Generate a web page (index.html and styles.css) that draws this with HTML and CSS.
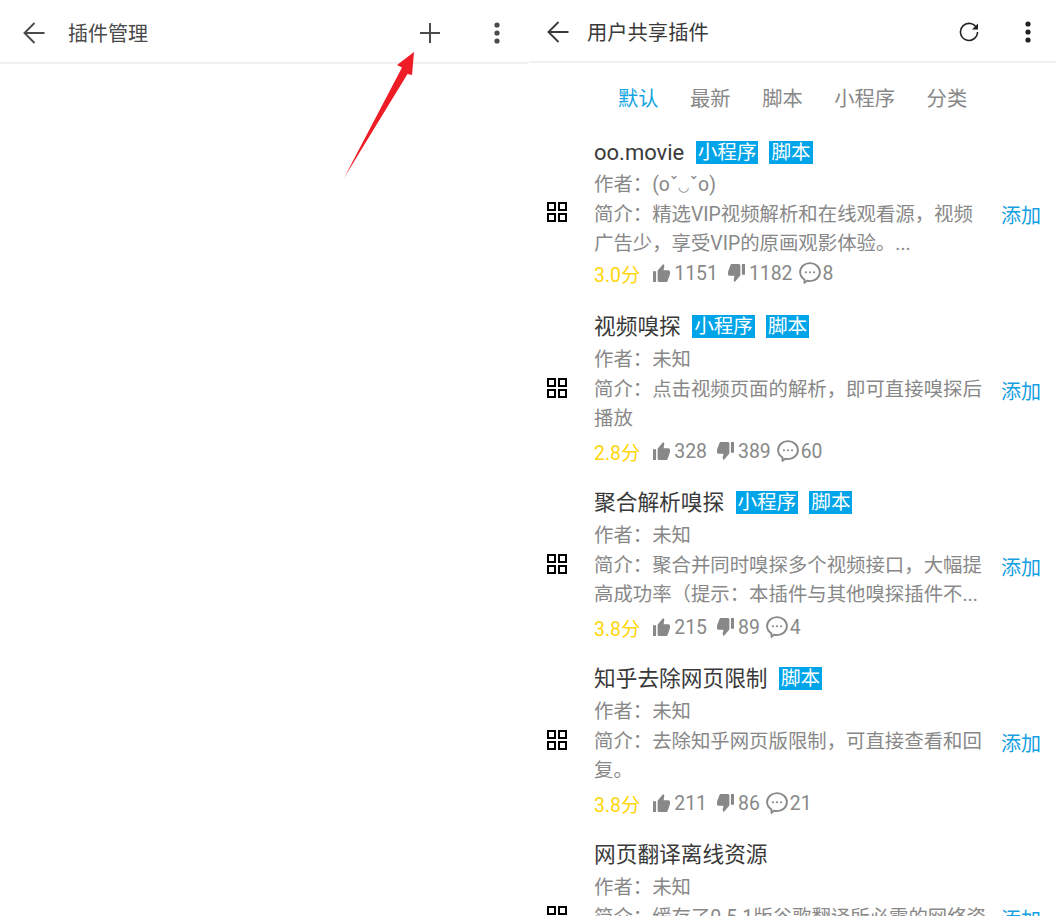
FILE: index.html
```html
<!DOCTYPE html>
<html lang="zh-CN">
<head>
  <meta charset="UTF-8" />
  <meta name="viewport" content="width=device-width, initial-scale=1.0"/>
  <title>用户共享插件</title>
  <link rel="stylesheet" href="styles.css">
</head>
<body>
  <svg class="defs" width="0" height="0">
    <symbol id="i-back" viewBox="0 0 22 22"><path d="M21.5 11H1.5M11.5 1 1.5 11l10 10" fill="none" stroke="currentColor" stroke-width="1.9"/></symbol>
    <symbol id="i-more" viewBox="0 0 6 22"><circle cx="3" cy="3" r="2.6"/><circle cx="3" cy="11" r="2.6"/><circle cx="3" cy="19" r="2.6"/></symbol>
    <symbol id="i-apps" viewBox="0 0 20 20"><path d="M1 1h7v7H1zM12 1h7v7h-7zM1 12h7v7H1zM12 12h7v7h-7z" fill="none" stroke="#000" stroke-width="2"/></symbol>
    <symbol id="i-up" viewBox="1 1 22 20" preserveAspectRatio="none"><path d="M1 21h4V9H1v12zm22-11c0-1.100-.9-2-2-2h-6.310l.95-4.570.03-.32c0-.41-.17-.79-.44-1.060L14.170 1 7.590 7.590C7.220 7.950 7 8.450 7 9v10c0 1.100.9 2 2 2h9c.83 0 1.540-.5 1.840-1.220l3.020-7.050c.09-.23.14-.47.14-.73v-2z"/></symbol>
    <symbol id="i-down" viewBox="1 3 22 20" preserveAspectRatio="none"><path d="M15 3H6c-.83 0-1.540.5-1.840 1.220l-3.020 7.050c-.09.23-.14.47-.14.73v2c0 1.100.9 2 2 2h6.310l-.95 4.570-.03.32c0 .41.17.79.44 1.060L9.830 23l6.590-6.590c.36-.36.58-.86.58-1.410V5c0-1.100-.9-2-2-2zm4 0v12h4V3h-4z"/></symbol>
    <symbol id="i-comment" viewBox="0 0 20 20"><path d="M10 1c5 0 9 3.600 9 8.200s-4 8.200-9 8.200c-.9 0-1.800-.1-2.600-.4L5 19v-3C2.600 14.500 1 12 1 9.200 1 4.600 5 1 10 1z" fill="none" stroke="currentColor" stroke-width="1.700" stroke-linejoin="round"/><circle cx="6.300" cy="9.300" r="1"/><circle cx="10" cy="9.300" r="1"/><circle cx="13.700" cy="9.300" r="1"/></symbol>
  </svg>

  <div class="page">
    <section class="panel panel-left">
      <header class="topbar topbar-left">
        <svg class="ic-back"><use href="#i-back"/></svg>
        <h1 class="topbar-title">插件管理</h1>
        <svg class="ic-plus" viewBox="0 0 20 20"><path d="M0 10h20M10 0v20" fill="none" stroke="currentColor" stroke-width="2"/></svg>
        <svg class="ic-more"><use href="#i-more"/></svg>
      </header>
      <svg class="red-arrow" viewBox="0 0 80 135" width="80" height="135">
        <polygon points="74,1 57,14 62,16.500 4,127 67.500,23 72,24" fill="#ee1c25"/>
      </svg>
    </section>

    <section class="panel panel-right">
      <header class="topbar">
        <svg class="ic-back"><use href="#i-back"/></svg>
        <h1 class="topbar-title">用户共享插件</h1>
        <svg class="ic-reload" viewBox="0 0 20 20"><path d="M17.800 6.500A8.500 8.500 0 1 0 18.500 10" fill="none" stroke="currentColor" stroke-width="1.600"/><path d="M19 1.500v6h-6z"/></svg>
        <svg class="ic-more"><use href="#i-more"/></svg>
      </header>

      <nav class="tabs">
        <span class="tab active">默认</span>
        <span class="tab">最新</span>
        <span class="tab">脚本</span>
        <span class="tab">小程序</span>
        <span class="tab">分类</span>
      </nav>

      <div class="plugin first">
        <svg class="ic-apps"><use href="#i-apps"/></svg>
        <div class="plugin-body">
          <div class="plugin-title">oo.movie <span class="tag">小程序</span><span class="tag">脚本</span></div>
          <div class="plugin-author">作者：(oˇ<span class="kao">◡</span>ˇo)</div>
          <div class="plugin-desc">简介：精选VIP视频解析和在线观看源，视频广告少，享受VIP的原画观影体验。...</div>
          <div class="plugin-stats">
            <span class="score">3.0分</span>
            <svg class="ic-stat"><use href="#i-up"/></svg><span class="num">1151</span>
            <svg class="ic-stat"><use href="#i-down"/></svg><span class="num">1182</span>
            <svg class="ic-comment"><use href="#i-comment"/></svg><span>8</span>
          </div>
        </div>
        <span class="add">添加</span>
      </div>

      <div class="plugin">
        <svg class="ic-apps"><use href="#i-apps"/></svg>
        <div class="plugin-body">
          <div class="plugin-title">视频嗅探 <span class="tag">小程序</span><span class="tag">脚本</span></div>
          <div class="plugin-author">作者：未知</div>
          <div class="plugin-desc">简介：点击视频页面的解析，即可直接嗅探后播放</div>
          <div class="plugin-stats">
            <span class="score">2.8分</span>
            <svg class="ic-stat"><use href="#i-up"/></svg><span class="num">328</span>
            <svg class="ic-stat"><use href="#i-down"/></svg><span class="num">389</span>
            <svg class="ic-comment"><use href="#i-comment"/></svg><span>60</span>
          </div>
        </div>
        <span class="add">添加</span>
      </div>

      <div class="plugin">
        <svg class="ic-apps"><use href="#i-apps"/></svg>
        <div class="plugin-body">
          <div class="plugin-title">聚合解析嗅探 <span class="tag">小程序</span><span class="tag">脚本</span></div>
          <div class="plugin-author">作者：未知</div>
          <div class="plugin-desc">简介：聚合并同时嗅探多个视频接口，大幅提高成功率（提示：本插件与其他嗅探插件不...</div>
          <div class="plugin-stats">
            <span class="score">3.8分</span>
            <svg class="ic-stat"><use href="#i-up"/></svg><span class="num">215</span>
            <svg class="ic-stat"><use href="#i-down"/></svg><span class="num">89</span>
            <svg class="ic-comment"><use href="#i-comment"/></svg><span>4</span>
          </div>
        </div>
        <span class="add">添加</span>
      </div>

      <div class="plugin">
        <svg class="ic-apps"><use href="#i-apps"/></svg>
        <div class="plugin-body">
          <div class="plugin-title">知乎去除网页限制 <span class="tag">脚本</span></div>
          <div class="plugin-author">作者：未知</div>
          <div class="plugin-desc">简介：去除知乎网页版限制，可直接查看和回复。</div>
          <div class="plugin-stats">
            <span class="score">3.8分</span>
            <svg class="ic-stat"><use href="#i-up"/></svg><span class="num">211</span>
            <svg class="ic-stat"><use href="#i-down"/></svg><span class="num">86</span>
            <svg class="ic-comment"><use href="#i-comment"/></svg><span>21</span>
          </div>
        </div>
        <span class="add">添加</span>
      </div>

      <div class="plugin">
        <svg class="ic-apps"><use href="#i-apps"/></svg>
        <div class="plugin-body">
          <div class="plugin-title">网页翻译离线资源</div>
          <div class="plugin-author">作者：未知</div>
          <div class="plugin-desc">简介：缓存了0.5.1版谷歌翻译所必需的网络资源，可离线使用</div>
          <div class="plugin-stats">
            <span class="score">4.0分</span>
          </div>
        </div>
        <span class="add">添加</span>
      </div>
    </section>
  </div>
</body>
</html>
```

FILE: styles.css
```css
* {
  box-sizing: border-box;
}

html, body {
  margin: 0;
  height: 916px;
  overflow: hidden;
  background: #fff;
}

body {
  color: #3a3a3a;
  font-family: Roboto, "Noto Sans CJK SC", sans-serif;
  font-size: 19.4px;
}

.defs {
  position: absolute;
}

.page {
  display: flex;
  height: 916px;
  overflow: hidden;
}

.panel {
  position: relative;
}

.panel-left {
  width: 528px;
  margin-right: 1px;
}

.panel-right {
  flex: 1;
  min-width: 0;
}

/* top bars */
.topbar {
  display: flex;
  align-items: center;
  height: 63px;
  padding: 3px 25px 0 18px;
  border-bottom: 2px solid #f0f0f0;
  color: #3a3a3a;
}

.topbar-left {
  height: 64px;
  padding: 4px 28px 0 23px;
  color: #4a4a4a;
}

.topbar-title {
  flex: 1;
  margin: -2px 0 0 18px;
  font-size: 20.3px;
  font-weight: normal;
}

.topbar-left .topbar-title {
  margin-left: 23px;
  font-size: 20px;
}

.ic-back {
  width: 22px;
  height: 22px;
  fill: currentColor;
}

.ic-plus {
  width: 20px;
  height: 20px;
  margin-right: 54px;
}

.ic-reload {
  width: 20px;
  height: 20px;
  margin-right: 46px;
  fill: #222;
  color: #222;
}

.ic-more {
  width: 6px;
  height: 22px;
  fill: #222;
}

.topbar-left .ic-more {
  fill: #4a4a4a;
}

.red-arrow {
  position: absolute;
  left: 340px;
  top: 51px;
}

/* tabs */
.tabs {
  display: flex;
  align-items: center;
  gap: 31.5px;
  height: 67px;
  margin-bottom: 7px;
  padding-left: 89px;
  color: #888;
  font-size: 20.3px;
}

.tab.active {
  color: #12a5e2;
}

/* plugin rows */
.plugin {
  display: flex;
  align-items: center;
  margin-bottom: 20px;
  padding: 0 15px 0 18px;
}

.plugin.first {
  margin-bottom: 22px;
}

.ic-apps {
  flex: none;
  width: 20px;
  height: 20px;
  margin-top: -3px;
  margin-right: 27px;
}

.plugin-body {
  width: 392px;
  flex: none;
}

.plugin-title {
  height: 33px;
  line-height: 32px;
  font-size: 21.7px;
  white-space: nowrap;
}

.first .plugin-title {
  height: 32px;
  font-size: 22px;
}

.tag {
  display: inline-block;
  height: 23px;
  margin-left: 6px;
  margin-right: 5px;
  padding: 0 2px;
  background: #00a4e8;
  color: #fff;
  font-size: 19.6px;
  line-height: 23px;
  vertical-align: 1px;
}

.plugin-author {
  height: 31px;
  line-height: 31px;
  color: #888;
}

.kao {
  font-size: 13px;
}

.plugin-desc {
  line-height: 29px;
  color: #888;
}

.plugin-stats {
  display: flex;
  align-items: center;
  height: 31px;
  margin-top: 3px;
  color: #888;
}

.first .plugin-stats {
  margin-top: 0;
}

.score {
  margin-right: 13px;
  color: #ffd60a;
}

.ic-stat {
  width: 17px;
  height: 18px;
  margin-top: -2px;
  margin-right: 4px;
  fill: currentColor;
}

.num {
  margin-right: 10px;
}

.num + .ic-comment {
  margin-left: -4px;
}

.ic-comment {
  width: 22px;
  height: 22px;
  margin-top: -2px;
  margin-right: 2px;
  fill: currentColor;
}

.add {
  margin-left: auto;
  margin-top: 2px;
  color: #12a0e0;
  font-size: 20px;
  white-space: nowrap;
}
```
